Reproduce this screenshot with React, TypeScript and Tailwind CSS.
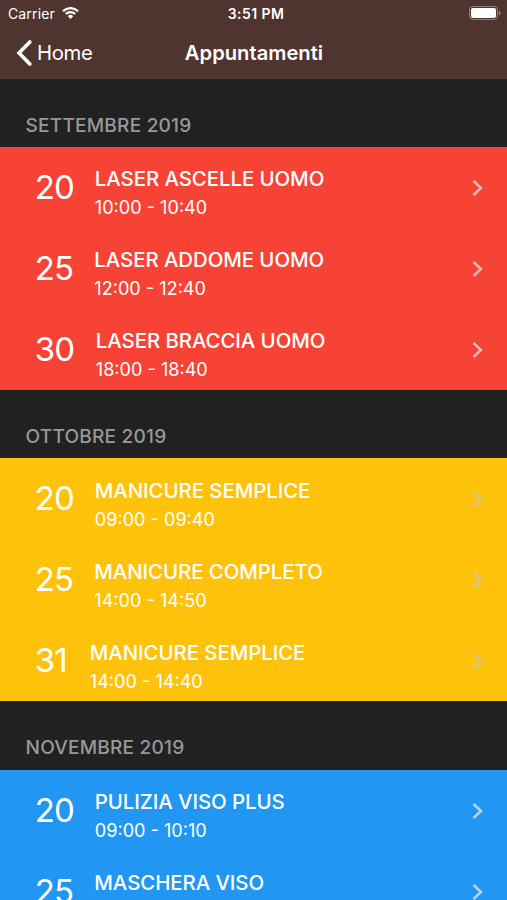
import React, { FC } from "react";

interface Appointment {
  day: string;
  title: string;
  time: string;
}

interface Month {
  name: string;
  color: string;
  chevron: string;
  items: Appointment[];
}

const months: Month[] = [
  {
    name: "SETTEMBRE 2019",
    color: "bg-[#f64336]",
    chevron: "text-[#dfb9b9]",
    items: [
      { day: "20", title: "LASER ASCELLE UOMO", time: "10:00 - 10:40" },
      { day: "25", title: "LASER ADDOME UOMO", time: "12:00 - 12:40" },
      { day: "30", title: "LASER BRACCIA UOMO", time: "18:00 - 18:40" },
    ],
  },
  {
    name: "OTTOBRE 2019",
    color: "bg-[#ffc20a]",
    chevron: "text-[#d0c591]",
    items: [
      { day: "20", title: "MANICURE SEMPLICE", time: "09:00 - 09:40" },
      { day: "25", title: "MANICURE COMPLETO", time: "14:00 - 14:50" },
      { day: "31", title: "MANICURE SEMPLICE", time: "14:00 - 14:40" },
    ],
  },
  {
    name: "NOVEMBRE 2019",
    color: "bg-[#2196f3]",
    chevron: "text-[#bdd2e3]",
    items: [
      { day: "20", title: "PULIZIA VISO PLUS", time: "09:00 - 10:10" },
      { day: "25", title: "MASCHERA VISO", time: "10:00 - 10:40" },
    ],
  },
];

// width of the day figure, the title starts right after it
const dayWidths: Record<string, string> = {
  "20": "w-[40px]",
  "25": "w-[39.5px]",
  "30": "w-[41px]",
  "31": "w-[35px]",
};

const AppointmentRow: FC<{ item: Appointment; chevron: string }> = ({ item, chevron }) => {
  return (
    <div className="flex h-[81px] pl-[34.8px] pr-6">
      <span className={`mr-5 shrink-0 pt-[18px] text-[33px] leading-[44px] font-[370] tracking-[-0.025em] ${dayWidths[item.day]}`}>
        {item.day}
      </span>
      <div className="flex-1 pt-[18.8px]">
        <h3 className="text-[20.4px] leading-7 font-[550] tracking-[-0.003em]">{item.title}</h3>
        <p className="text-[18.1px] leading-7">{item.time}</p>
      </div>
      <svg className={`mt-[33px] h-4 w-[11px] ${chevron}`} viewBox="0 0 11 16" fill="none" stroke="currentColor" strokeWidth="2.5">
        <path d="M1.5 1 9 8l-7.5 7" />
      </svg>
    </div>
  );
};

const App: FC = () => {
  return (
    <div className="h-[900px] overflow-hidden bg-[#212121] font-['Inter',sans-serif] text-white">
      <header className="h-[79px] bg-[#4f342f]">
        <div className="grid h-7 grid-cols-3 items-center px-2 text-[14px]">
          <div className="flex items-center gap-[7px] pb-0.5">
            <span className="tracking-[0.01em]">Carrier</span>
            <svg className="h-3 w-[17px]" viewBox="0 0 17 12" fill="none" stroke="currentColor" strokeWidth="2.2">
              <path d="M1 4.2a10.6 10.6 0 0 1 15 0M3.8 7a6.6 6.6 0 0 1 9.4 0" />
              <path d="m8.5 12-2.7-2.8a3.8 3.8 0 0 1 5.4 0z" fill="currentColor" stroke="none" />
            </svg>
          </div>
          <span className="pb-0.5 pl-[5px] text-center font-semibold tracking-[0.03em]">3:51 PM</span>
          <svg className="mb-0.5 h-[14px] w-8 translate-x-0.5 justify-self-end" viewBox="0 0 32 14">
            <rect x=".5" y=".5" width="28" height="13" rx="3.5" fill="none" stroke="#92807d" />
            <rect x="2" y="2" width="25" height="10" rx="2" fill="white" />
            <path d="M30 4.5q3 2.5 0 5z" fill="#a2928f" />
          </svg>
        </div>
        <div className="grid h-12 grid-cols-3 items-center px-4 pt-px text-[20px]">
          <div className="flex items-center gap-[5px]">
            <svg className="h-[26px] w-4" viewBox="0 0 16 26" fill="none" stroke="currentColor" strokeWidth="3.6" strokeLinecap="round">
              <path d="M13.8 2 3 13l10.8 11" />
            </svg>
            <span className="pt-0.5 text-[20.3px] tracking-[-0.015em]">Home</span>
          </div>
          <h1 className="pl-px pt-0.5 text-center text-[20.2px] font-semibold">Appuntamenti</h1>
        </div>
      </header>
      {months.map((month, i) => (
        <section key={month.name}>
          <h2
            className={`flex items-center pt-[24.6px] pl-[25.5px] text-[19.1px] font-[540] tracking-[0.01em] text-[#989898] ${
              i === 0 ? "h-[67.7px]" : "h-[68.5px]"
            }`}
          >
            {month.name}
          </h2>
          <div className={month.color}>
            {month.items.map((item) => (
              <AppointmentRow key={item.day} item={item} chevron={month.chevron} />
            ))}
          </div>
        </section>
      ))}
    </div>
  );
};

export default App;
